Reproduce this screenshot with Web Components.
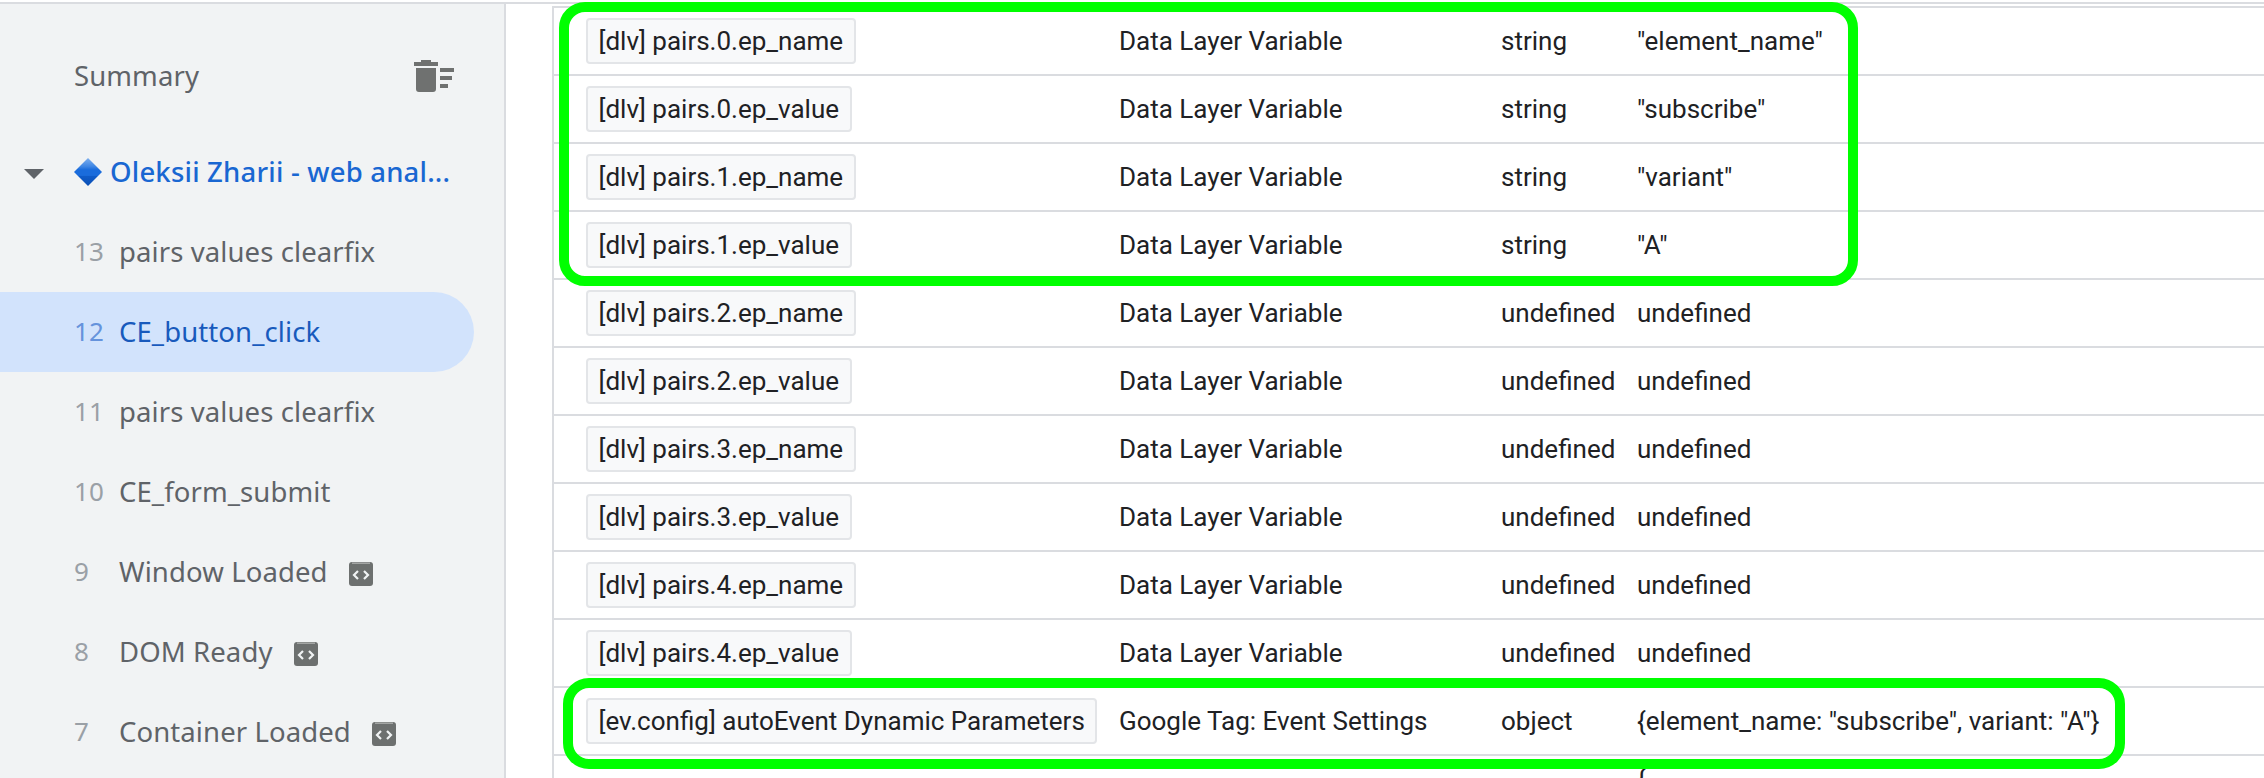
<!DOCTYPE html>
<html>
<head>
<meta charset="utf-8">
<title>Summary</title>
<style>
html, body { margin: 0; padding: 0; height: 100%; overflow: hidden; background: #fff; }
</style>
</head>
<body>
<debug-app>
  <event-sidebar slot="side">
    <event-item num="13">pairs values clearfix</event-item>
    <event-item num="12" active>CE_button_click</event-item>
    <event-item num="11">pairs values clearfix</event-item>
    <event-item num="10">CE_form_submit</event-item>
    <event-item num="9" code>Window Loaded</event-item>
    <event-item num="8" code>DOM Ready</event-item>
    <event-item num="7" code>Container Loaded</event-item>
  </event-sidebar>
  <var-table slot="main">
    <var-row name="[dlv] pairs.0.ep_name" kind="Data Layer Variable" vtype="string" value='"element_name"'></var-row>
    <var-row name="[dlv] pairs.0.ep_value" kind="Data Layer Variable" vtype="string" value='"subscribe"'></var-row>
    <var-row name="[dlv] pairs.1.ep_name" kind="Data Layer Variable" vtype="string" value='"variant"'></var-row>
    <var-row name="[dlv] pairs.1.ep_value" kind="Data Layer Variable" vtype="string" value='"A"'></var-row>
    <var-row name="[dlv] pairs.2.ep_name" kind="Data Layer Variable" vtype="undefined" value="undefined"></var-row>
    <var-row name="[dlv] pairs.2.ep_value" kind="Data Layer Variable" vtype="undefined" value="undefined"></var-row>
    <var-row name="[dlv] pairs.3.ep_name" kind="Data Layer Variable" vtype="undefined" value="undefined"></var-row>
    <var-row name="[dlv] pairs.3.ep_value" kind="Data Layer Variable" vtype="undefined" value="undefined"></var-row>
    <var-row name="[dlv] pairs.4.ep_name" kind="Data Layer Variable" vtype="undefined" value="undefined"></var-row>
    <var-row name="[dlv] pairs.4.ep_value" kind="Data Layer Variable" vtype="undefined" value="undefined"></var-row>
    <var-row name="[ev.config] autoEvent Dynamic Parameters" kind="Google Tag: Event Settings" vtype="object" value='{element_name: "subscribe", variant: "A"}'></var-row>
    <var-row tall value="{"></var-row>
  </var-table>
  <green-box style="left:559px;top:2px;width:1299px;height:284px"></green-box>
  <green-box style="left:563px;top:678px;width:1562px;height:91px"></green-box>
</debug-app>
<script>
class DebugApp extends HTMLElement {
    constructor() {
        super();
        this.attachShadow({mode: "open"}).innerHTML = `
        <style>
            :host { display: block; position: relative; height: 778px; overflow: hidden; box-sizing: border-box; padding-top: 2px; }
            .wrap { display: flex; height: 100%; border-top: 2px solid #dadce0; box-sizing: border-box; }
        </style>
        <div class="wrap">
            <slot name="side"></slot>
            <slot name="main"></slot>
        </div>
        <slot></slot>`;
    }
}
customElements.define("debug-app", DebugApp);

class EventSidebar extends HTMLElement {
    constructor() {
        super();
        this.attachShadow({mode: "open"}).innerHTML = `
        <style>
            :host { display: block; flex: none; width: 506px; box-sizing: border-box; background: #f1f3f4; border-right: 2px solid #dadce0; padding-top: 32px; font-family: "Noto Sans", sans-serif; font-size: 27.5px; letter-spacing: .1px; color: #5f6368; }
            .head { display: flex; align-items: center; justify-content: space-between; height: 80px; padding: 0 50px 0 74px; margin-bottom: 16px; }
            .head span, .title span { position: relative; top: -1px; }
            .title { display: flex; align-items: center; height: 80px; padding-left: 24px; color: #1967d2; white-space: nowrap; font-weight: 500; letter-spacing: .2px; }
            .arrow { width: 20px; height: 10px; margin-right: 30px; margin-top: 4px; }
            .gem { width: 28px; height: 28px; margin-right: 8px; }
            svg { display: block; }
        </style>
        <div class="head">
            <span>Summary</span>
            <svg width="40" height="32" viewBox="0 0 40 32"><path fill="#6f7170" d="M7 0h10v2h7v4H0V2h7zM2 8h20v21a3 3 0 0 1-3 3H5a3 3 0 0 1-3-3zM26 8h14v4H26zM26 16h12v4H26zM26 24h8v4h-8z"/></svg>
        </div>
        <div class="title">
            <svg class="arrow" viewBox="0 0 20 10"><path fill="#5f6368" d="M0 0h20L10 10z"/></svg>
            <svg class="gem" viewBox="0 0 28 28">
                <defs><linearGradient id="g" x1="0" y1="0" x2="0" y2="1">
                    <stop offset="0" stop-color="#7fb0ee"/><stop offset=".3" stop-color="#3f86e4"/><stop offset=".42" stop-color="#1a6cdc"/><stop offset=".62" stop-color="#1a6cdc"/><stop offset=".66" stop-color="#0f5bc8"/><stop offset="1" stop-color="#0b4fb4"/>
                </linearGradient></defs>
                <path fill="url(#g)" d="M14 0l14 14-14 14L0 14z"/>
            </svg>
            <span>Oleksii Zharii - web anal...</span>
        </div>
        <slot></slot>`;
    }
}
customElements.define("event-sidebar", EventSidebar);

class EventItem extends HTMLElement {
    constructor() {
        super();
        const code = this.hasAttribute("code") ? `
            <svg class="code" width="24" height="24" viewBox="0 0 24 24">
                <rect width="24" height="24" rx="3" fill="#6d706f"/>
                <path d="M3 1.2h18" stroke="#a3a5a4" stroke-width="1.6"/>
                <path d="M9 9l-4 4 4 4M15 9l4 4-4 4" fill="none" stroke="#f1f3f4" stroke-width="2.2"/>
            </svg>` : "";
        this.attachShadow({mode: "open"}).innerHTML = `
        <style>
            :host { display: flex; align-items: center; height: 80px; width: 474px; box-sizing: border-box; padding-left: 74px; border-radius: 0 40px 40px 0; white-space: nowrap; }
            :host([active]) { background: #d2e3fc; color: #185abc; }
            .num { width: 45px; flex: none; color: #9aa0a6; font-size: 26px; }
            :host([active]) .num { color: #6593dc; }
            .label { position: relative; top: -1px; }
            .code { margin-left: 21px; margin-top: 4px; }
        </style>
        <span class="num label">${this.getAttribute("num")}</span><span class="label"><slot></slot></span>${code}`;
    }
}
customElements.define("event-item", EventItem);

class VarTable extends HTMLElement {
    constructor() {
        super();
        this.attachShadow({mode: "open"}).innerHTML = `
        <style>
            :host { display: block; flex: 1; min-width: 0; margin: 2px 0 0 46px; border-top: 2px solid #dadce0; border-left: 2px solid #dadce0; font-family: Roboto, sans-serif; font-size: 26px; color: #202124; }
        </style>
        <slot></slot>`;
    }
}
customElements.define("var-table", VarTable);

class VarRow extends HTMLElement {
    constructor() {
        super();
        const chip = this.getAttribute("name") ? `<span class="chip">${this.getAttribute("name")}</span>` : "";
        this.attachShadow({mode: "open"}).innerHTML = `
        <style>
            :host { display: grid; grid-template-columns: 533px 382px 136px 1fr; align-items: center; height: 68px; box-sizing: border-box; padding-left: 32px; border-bottom: 2px solid #dadce0; white-space: nowrap; }
            :host([tall]) { align-items: start; height: auto; border: 0; line-height: 40px; padding-top: 3px; }
            .chip { display: inline-block; box-sizing: border-box; height: 46px; line-height: 42px; padding: 0 10.5px; border: 2px solid #e3e5e8; border-radius: 4px; background: #f8f9fa; }
        </style>
        <div>${chip}</div>
        <div>${this.getAttribute("kind") || ""}</div>
        <div>${this.getAttribute("vtype") || ""}</div>
        <div>${this.getAttribute("value")}</div>`;
    }
}
customElements.define("var-row", VarRow);

class GreenBox extends HTMLElement {
    constructor() {
        super();
        this.attachShadow({mode: "open"}).innerHTML = `
        <style>
            :host { display: block; position: absolute; box-sizing: border-box; border: 10px solid #00ff00; border-radius: 26px; pointer-events: none; }
        </style>`;
    }
}
customElements.define("green-box", GreenBox);
</script>
</body>
</html>
